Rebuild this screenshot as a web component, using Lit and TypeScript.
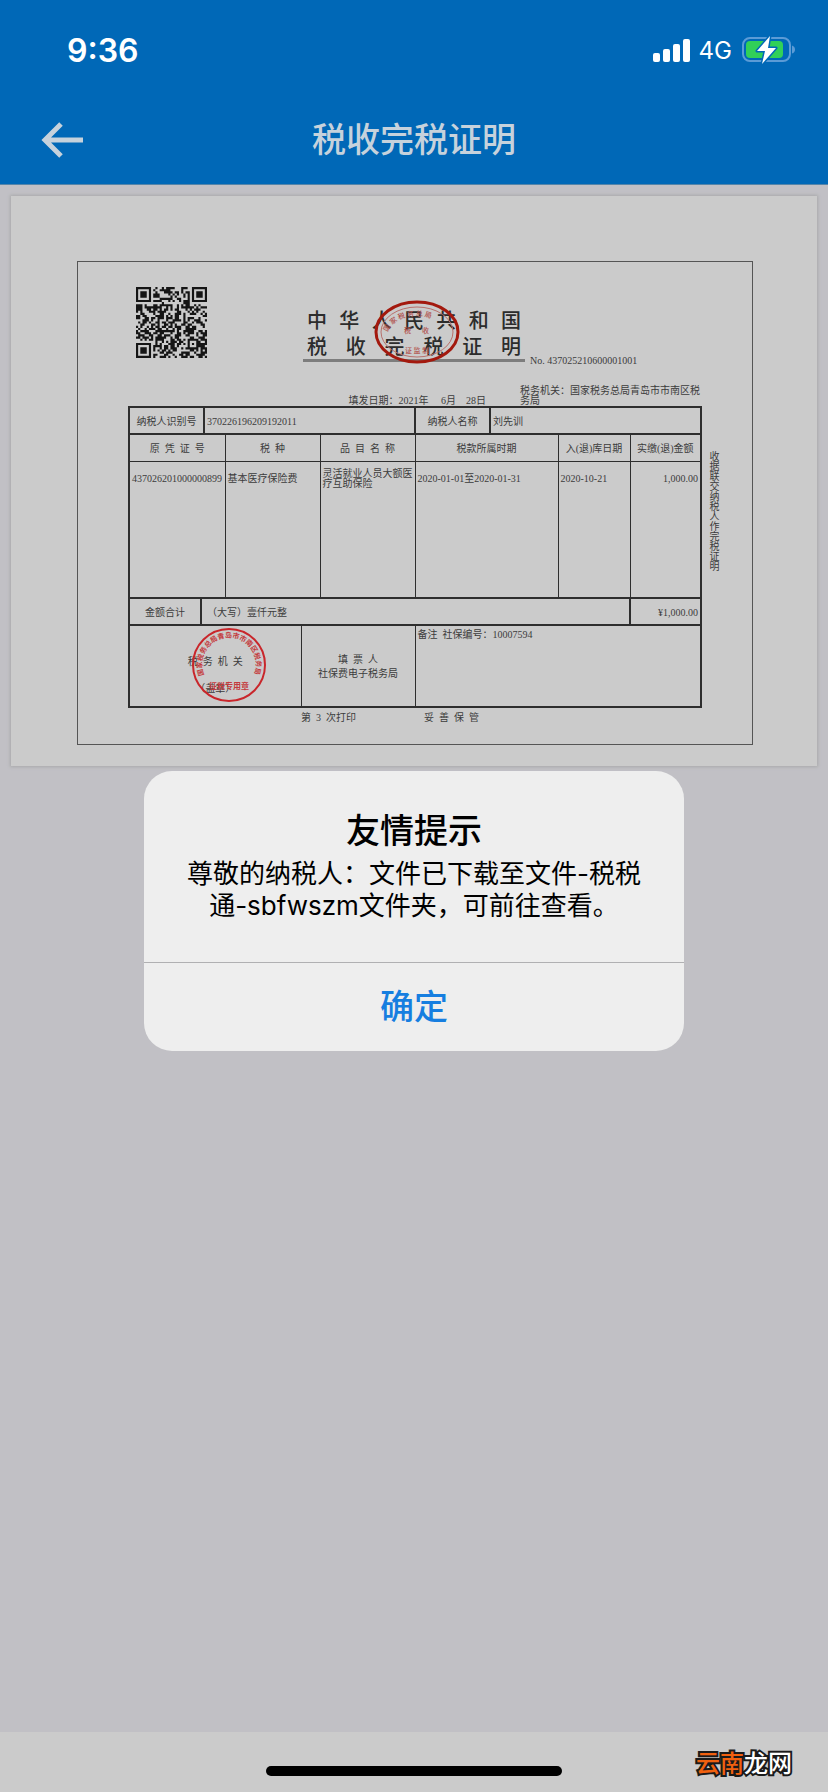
import { LitElement, html, css, svg } from "lit";
import { customElement } from "lit/decorators.js";

const N = 33;

function inFinder(x: number, y: number): boolean | null {
  for (const [fx, fy] of [[0, 0], [N - 7, 0], [0, N - 7]]) {
    const dx = x - fx;
    const dy = y - fy;
    if (dx >= -1 && dx <= 7 && dy >= -1 && dy <= 7) {
      const ring = Math.max(Math.abs(dx - 3), Math.abs(dy - 3));
      return ring === 3 || ring <= 1;
    }
  }
  const ring = Math.max(Math.abs(x - 26), Math.abs(y - 26));
  if (ring <= 2) return ring !== 1;
  return null;
}

function qrPath(): string {
  let seed = 4370252;
  let d = "";
  for (let y = 0; y < N; y++) {
    for (let x = 0; x < N; x++) {
      seed = (seed * 1103515245 + 12345) % 2147483648;
      const fixed = inFinder(x, y);
      const on = fixed === null ? seed / 2147483648 < 0.52 : fixed;
      if (on) d += `M${x} ${y}h1v1h-1z`;
    }
  }
  return d;
}

@customElement("qr-code")
class QrCode extends LitElement {
  static styles = css`
    :host { display: block; }
    svg { display: block; width: 100%; }
  `;
  render() {
    return html`<svg viewBox="0 0 33 33" role="img" aria-label="二维码"><path d=${qrPath()} fill="#151515"></path></svg>`;
  }
}

@customElement("tax-certificate")
class TaxCertificate extends LitElement {
  static styles = css`
    :host {
      display: block;
      background: #cbcbcb;
      padding: 65px 64px 21px 66px;
      box-shadow: 0 0 3px 1px #a9a9ab;
      color: #3c3c3c;
      font: 10px/10px "Liberation Serif", "Noto Sans CJK SC", serif;
    }
    .frame {
      border: 1px solid #555;
      padding: 25px 36px 16px 50px;
    }
    .head { display: flex; align-items: flex-end; height: 79px; padding-left: 8px; margin-right: 16px; }
    .qr { width: 71px; align-self: flex-start; }
    .titles {
      position: relative;
      flex: none;
      width: 222px;
      box-sizing: border-box;
      margin: 0 5px 4px 96px;
      padding: 0 4px;
      border-bottom: 3px solid #7d7d7d;
      font: 500 20px/26px "Noto Sans CJK SC", sans-serif;
      color: #2c2c2c;
    }
    .titles h2 { margin: 0; font: inherit; text-align-last: justify; }
    .oval { position: absolute; left: 71px; top: -7px; width: 86px; height: 64px; }
    .meta { display: flex; justify-content: flex-end; margin: 20px 16px 0 0; height: 20px; }
    .date { white-space: pre; align-self: flex-end; margin-right: 34px; }
    .office { width: 180px; }
    .body { display: grid; grid-template-columns: 1fr 16px; }
    table { width: 100%; table-layout: fixed; border-collapse: collapse; border: 2px solid #2e2e2e; }
    th, td { border: 1px solid #2e2e2e; padding: 2px 0 0; font-weight: 400; text-align: center; white-space: pre; }
    .short { height: 27px; }
    .thick > * { border: 2px solid #2e2e2e; }
    .left { text-align: left; padding-left: 2px; }
    .pad { padding-left: 5px; }
    .right { text-align: right; padding-right: 2px; }
    .items { height: 137px; }
    .items td { vertical-align: top; padding-top: 7px; line-height: 20px; }
    .items .two { line-height: 10px; }
    .last { height: 81px; }
    .last .note { vertical-align: top; padding-top: 4px; }
    .organ { position: relative; height: 78px; line-height: 27px; padding-top: 20px; box-sizing: border-box; }
    .round { position: absolute; left: 61px; top: -1px; width: 76px; height: 76px; }
    .maker { line-height: 14px; }
    .side { writing-mode: vertical-rl; margin: 45px 0 0 4px; line-height: 10px; }
    .foot { display: flex; gap: 68px; padding-left: 173px; line-height: 20px; white-space: pre; }
    svg text { font-family: "Noto Sans CJK SC", sans-serif; }
  `;

  oval() {
    return svg`<svg class="oval" viewBox="0 0 86 64" role="img" aria-label="税收票证监制章">
      <defs><path id="ot" d="M13 36A30 20 0 0 1 73 36"></path></defs>
      <ellipse cx="43" cy="32" rx="41" ry="30" fill="none" stroke="#a3190e" stroke-width="3"></ellipse>
      <ellipse cx="43" cy="32" rx="36" ry="25" fill="none" stroke="#b8706c" stroke-width="1"></ellipse>
      <g fill="#b1524d" font-size="7">
        <text><textPath href="#ot" startOffset="4">国 家 税 务 总 局</textPath></text>
        <text x="30" y="33">税</text><text x="48" y="33">收</text>
        <text x="31" y="53">证 监 制</text>
      </g>
    </svg>`;
  }

  round() {
    return svg`<svg class="round" viewBox="0 0 76 76" role="img" aria-label="征税专用章">
      <defs><path id="rt" d="M14 50A27 27 0 1 1 62 50"></path></defs>
      <circle cx="38" cy="38" r="36" fill="none" stroke="#c9262b" stroke-width="2"></circle>
      <g fill="#c43a3d" font-weight="700">
        <text font-size="7"><textPath href="#rt" startOffset="2">国家税务总局青岛市市南区税务局</textPath></text>
        <text x="38" y="62" font-size="8" text-anchor="middle">征税专用章</text>
      </g>
    </svg>`;
  }

  render() {
    const cols = [72, 3, 21, 76, 19, 95, 75, 68, 72, 71];
    return html`
      <div class="frame">
        <div class="head">
          <qr-code class="qr"></qr-code>
          <div class="titles">
            <h2>中 华 人 民 共 和 国</h2>
            <h2>税 收 完 税 证 明</h2>
            ${this.oval()}
          </div>
          <span>No. 437025210600001001</span>
        </div>
        <div class="meta">
          <div class="date">填发日期：2021年     6月    28日</div>
          <div class="office">税务机关：国家税务总局青岛市市南区税务局</div>
        </div>
        <div class="body">
          <table>
            <colgroup>${cols.map((w) => html`<col width=${w}>`)}</colgroup>
            <tbody>
              <tr class="short thick">
                <th colspan="2">纳税人识别号</th><td class="left" colspan="4">370226196209192011</td>
                <th>纳税人名称</th><td class="left" colspan="3">刘先训</td>
              </tr>
              <tr class="short">
                <th colspan="3">原  凭  证  号</th><th colspan="2">税  种</th><th>品  目  名  称</th>
                <th colspan="2">税款所属时期</th><th>入(退)库日期</th><th>实缴(退)金额</th>
              </tr>
              <tr class="items">
                <td class="left" colspan="3">437026201000000899</td><td class="left" colspan="2">基本医疗保险费</td>
                <td class="left two">灵活就业人员大额医<br>疗互助保险</td>
                <td class="left" colspan="2">2020-01-01至2020-01-31</td><td class="left">2020-10-21</td><td class="right">1,000.00</td>
              </tr>
              <tr class="short thick">
                <th>金额合计</th><td class="left pad" colspan="8">（大写）壹仟元整</td><td class="right">¥1,000.00</td>
              </tr>
              <tr class="last">
                <td colspan="4"><div class="organ">税  务  机  关<br>（盖章）${this.round()}</div></td>
                <td class="maker" colspan="2">填  票  人<br>社保费电子税务局</td>
                <td class="left note" colspan="4">备注  社保编号：10007594</td>
              </tr>
            </tbody>
          </table>
          <div class="side">收据联交纳税人作完税证明</div>
        </div>
        <div class="foot"><span>第  3  次打印</span><span>妥  善  保  管</span></div>
      </div>`;
  }
}

@customElement("app-root")
class AppRoot extends LitElement {
  static styles = css`
    :host {
      display: flex;
      flex-direction: column;
      position: relative;
      min-height: 100vh;
      background: #c1c0c5;
      font-family: "Inter", "Noto Sans CJK SC", sans-serif;
    }
    header { background: #0068b7; color: #fff; border-bottom: 1px solid #5585aa; }
    .status { display: flex; align-items: center; height: 100px; box-sizing: border-box; padding: 0 32px 0 67px; }
    .time { flex: 1; font-size: 32px; font-weight: 600; }
    .net { font-size: 24px; margin: 0 10px 0 8px; }
    .bars { width: 38px; height: 24px; }
    .battery { width: 54px; height: 28px; }
    .nav { display: grid; grid-template-columns: 84px 1fr 84px; align-items: center; height: 80px; padding-bottom: 4px; }
    .back { background: none; border: 0; padding: 0 0 0 40px; height: 60px; }
    .back svg { display: block; width: 44px; height: 38px; }
    h1 { margin: 0; text-align: center; font-size: 34px; line-height: 48px; font-weight: 500; color: #c6d2dc; }
    main { flex: 1; padding: 11px 11px 0; }
    footer { position: relative; height: 60px; background: #cbcbcb; display: flex; justify-content: center; }
    .home { width: 296px; height: 10px; border-radius: 5px; background: #000; margin-top: 34px; }
    .mark {
      position: absolute; right: 36px; top: 14px; font-size: 24px; line-height: 36px; font-weight: 500; color: #fff;
      -webkit-text-stroke: 4px #1a1a1a; paint-order: stroke fill;
    }
    .mark b { color: #f0600f; font-weight: 500; }
    .overlay { position: absolute; inset: 0; display: grid; place-items: center; padding-top: 29px; }
    .dialog { width: 540px; background: #eee; border-radius: 28px; text-align: center; color: #000; overflow: hidden; }
    .dialog h2 { margin: 36px 0 0; font-size: 34px; line-height: 48px; font-weight: 500; }
    .dialog p { margin: 3px 0 40px; font-size: 26px; line-height: 32px; }
    .ok {
      display: block; width: 100%; height: 89px; border: 0; border-top: 1px solid #b0b0b2; background: none;
      font: 500 34px/48px "Inter", "Noto Sans CJK SC", sans-serif; color: #167ee0;
    }
  `;

  render() {
    return html`
      <header>
        <div class="status">
          <span class="time">9:36</span>
          <svg class="bars" viewBox="0 0 38 24" fill="#fff" aria-hidden="true">
            <rect x="0" y="15" width="7" height="9" rx="2"></rect><rect x="10" y="11" width="7" height="13" rx="2"></rect>
            <rect x="20" y="6" width="7" height="18" rx="2"></rect><rect x="30" y="1" width="7" height="23" rx="2"></rect>
          </svg>
          <span class="net">4G</span>
          <svg class="battery" viewBox="0 0 54 28" aria-hidden="true">
            <rect x="1" y="2" width="47" height="23" rx="7" fill="none" stroke="#5b9bd6" stroke-width="2"></rect>
            <rect x="4" y="5" width="37" height="17" rx="4" fill="#31d058"></rect>
            <path d="M50 9.500q3 1 3 4t-3 4z" fill="#5b9bd6"></path>
            <path d="M28 0L15 15h8l-3 13L34 12h-8z" fill="#fff" stroke="#0068b7" stroke-width="3" stroke-linejoin="round" paint-order="stroke"></path>
          </svg>
        </div>
        <div class="nav">
          <button class="back" aria-label="返回">
            <svg viewBox="0 0 44 38" fill="none" stroke="#c6d2dc" stroke-width="5"><path d="M21 3L5 19l16 16M4 19h39"></path></svg>
          </button>
          <h1>税收完税证明</h1>
        </div>
      </header>
      <main><tax-certificate></tax-certificate></main>
      <footer>
        <div class="home"></div>
        <div class="mark"><b>云南</b>龙网</div>
      </footer>
      <div class="overlay">
        <div class="dialog" role="alertdialog" aria-labelledby="dt" aria-describedby="dm">
          <h2 id="dt">友情提示</h2>
          <p id="dm">尊敬的纳税人：文件已下载至文件-税税<br>通-sbfwszm文件夹，可前往查看。</p>
          <button class="ok">确定</button>
        </div>
      </div>`;
  }
}
